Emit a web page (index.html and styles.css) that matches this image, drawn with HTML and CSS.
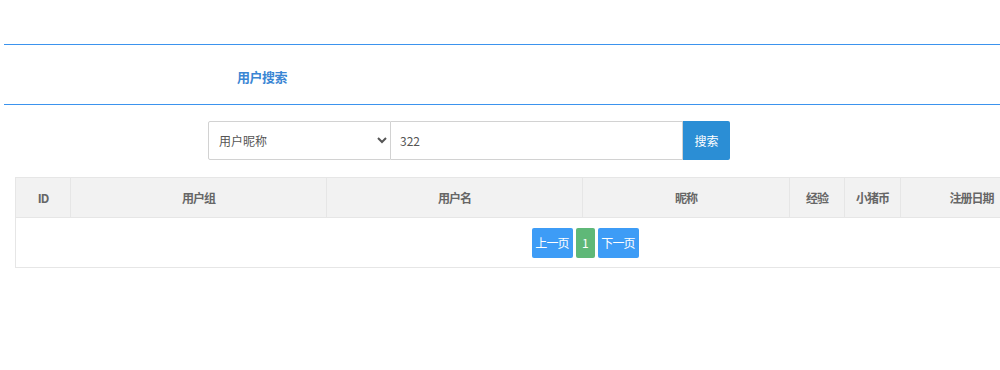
FILE: index.html
```html
<!DOCTYPE html>
<html lang="zh-CN">
<head>
    <meta charset="UTF-8">
    <title>用户搜索</title>
    <link rel="stylesheet" href="styles.css">
</head>
<body>
    <div class="panel">
        <div class="panel-title">用户搜索</div>
    </div>

    <form class="search-bar" onsubmit="return false;">
        <select class="search-type">
            <option>用户昵称</option>
            <option>用户名</option>
            <option>用户ID</option>
        </select>
        <input class="search-input" type="text" value="322">
        <button class="search-btn" type="submit">搜索</button>
    </form>

    <table class="user-table">
        <thead>
            <tr>
                <th class="col-id">ID</th>
                <th class="col-group">用户组</th>
                <th class="col-name">用户名</th>
                <th class="col-nick">昵称</th>
                <th class="col-exp">经验</th>
                <th class="col-coin">小猪币</th>
                <th class="col-date">注册日期</th>
                <th class="col-op"></th>
            </tr>
        </thead>
        <tbody>
            <tr>
                <td colspan="8" class="pager-cell">
                    <div class="pager">
                        <a class="page-btn">上一页</a>
                        <a class="page-btn current">1</a>
                        <a class="page-btn">下一页</a>
                    </div>
                </td>
            </tr>
        </tbody>
    </table>
</body>
</html>
```

FILE: styles.css
```css
html, body {
    overflow: hidden;
}

body {
    margin: 0;
    padding: 44px 0 0 4px;
    font-family: "Noto Sans CJK SC", "Noto Sans", sans-serif;
    color: #555;
    background: #fff;
}

.panel {
    border-top: 1px solid #3b93ee;
    border-bottom: 1px solid #3b93ee;
    height: 59px;
    display: flex;
    align-items: center;
}

.panel-title {
    margin: 3px 0 0 233px;
    font-size: 13px;
    font-weight: bold;
    color: #3a86d4;
    letter-spacing: -0.5px;
}

.search-bar {
    display: flex;
    margin: 16px 0 0 204px;
    height: 39px;
}

.search-type {
    width: 183px;
    height: 39px;
    border: 1px solid #d2d2d2;
    border-radius: 2px 0 0 2px;
    background: #fff;
    padding: 0 6px;
    font-family: inherit;
    font-size: 12px;
    color: #555;
}

.search-input {
    width: 292px;
    height: 39px;
    box-sizing: border-box;
    border: 1px solid #d2d2d2;
    border-left: none;
    padding: 0 9px;
    font-family: inherit;
    font-size: 12px;
    color: #555;
    outline: none;
}

.search-btn {
    width: 47px;
    height: 39px;
    border: none;
    border-radius: 0 2px 2px 0;
    background: #2b8ed5;
    color: #fff;
    font-family: inherit;
    font-size: 12px;
    cursor: pointer;
}

.user-table {
    margin: 17px 0 0 11px;
    width: 1140px;
    border-collapse: collapse;
    table-layout: fixed;
    font-size: 12px;
    color: #666;
}

.user-table th {
    height: 39px;
    background: #f2f2f2;
    border: 1px solid #e6e6e6;
    font-weight: bold;
    letter-spacing: -1px;
    text-align: center;
    padding: 0;
}

.col-id { width: 54px; }
.col-group { width: 255px; }
.col-name { width: 255px; }
.col-nick { width: 206px; }
.col-exp { width: 54px; }
.col-coin { width: 55px; }
.col-date { width: 141px; }

.pager-cell {
    height: 49px;
    border: 1px solid #e6e6e6;
    padding: 0;
}

.pager {
    display: flex;
    justify-content: center;
    gap: 3px;
}

.page-btn {
    display: inline-flex;
    align-items: center;
    justify-content: center;
    height: 30px;
    min-width: 41px;
    border-radius: 2px;
    background: #3d9cf6;
    color: #fff;
    font-size: 12px;
    letter-spacing: -0.8px;
    cursor: pointer;
}

.page-btn.current {
    min-width: 19px;
    background: #5fb878;
}
```
